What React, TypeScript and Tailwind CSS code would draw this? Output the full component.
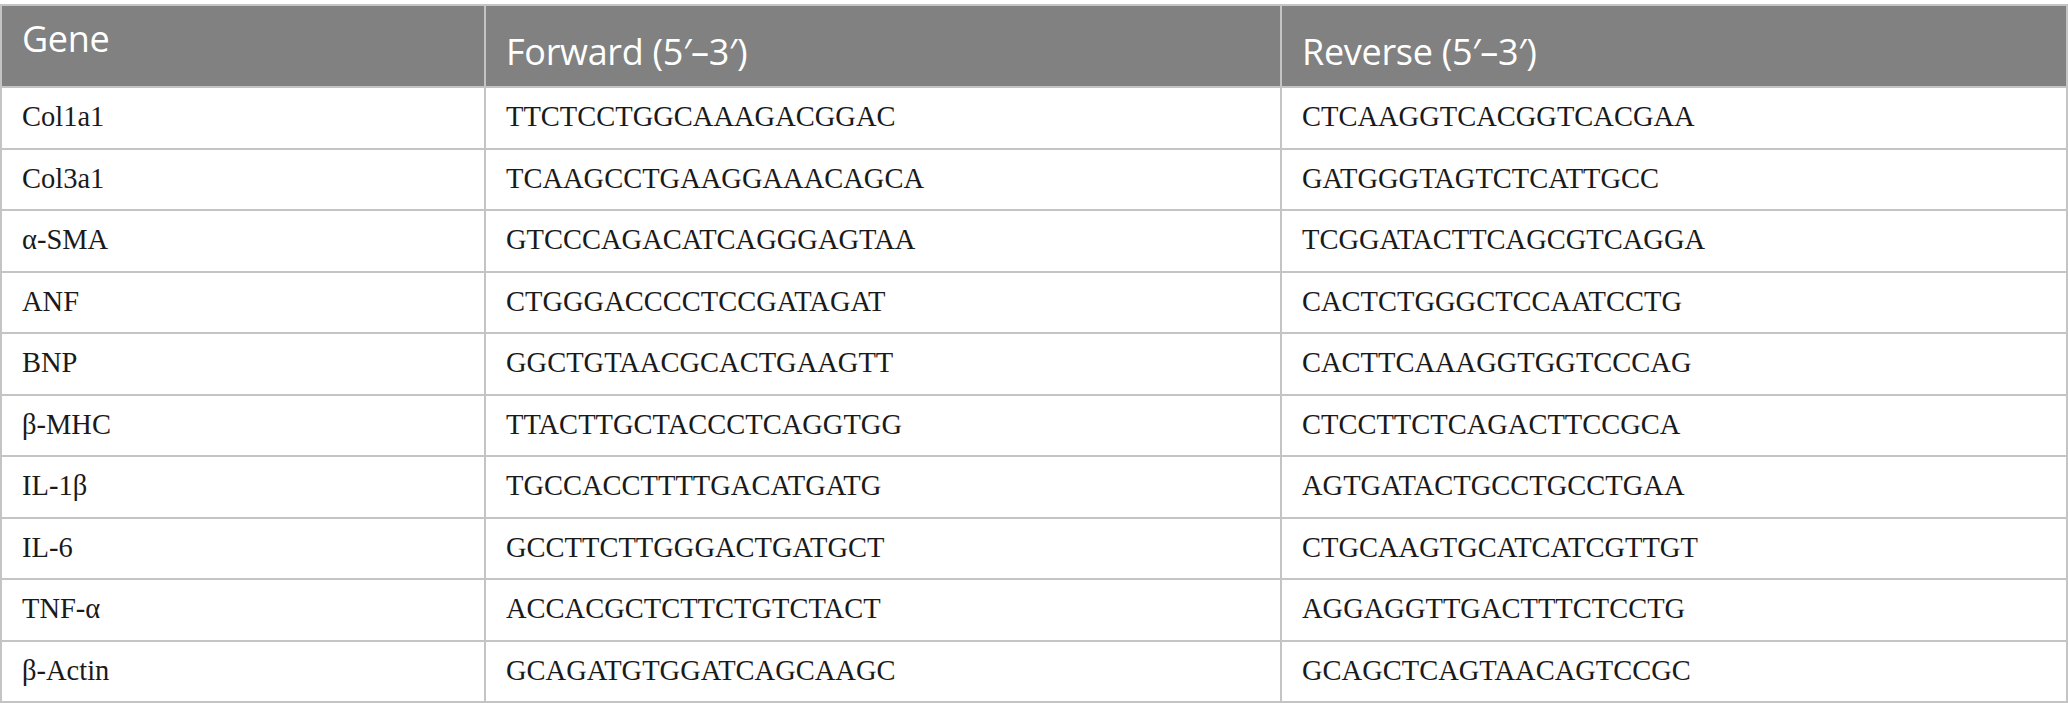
const rows: [string, string, string][] = [
  ["Col1a1", "TTCTCCTGGCAAAGACGGAC", "CTCAAGGTCACGGTCACGAA"],
  ["Col3a1", "TCAAGCCTGAAGGAAACAGCA", "GATGGGTAGTCTCATTGCC"],
  ["α-SMA", "GTCCCAGACATCAGGGAGTAA", "TCGGATACTTCAGCGTCAGGA"],
  ["ANF", "CTGGGACCCCTCCGATAGAT", "CACTCTGGGCTCCAATCCTG"],
  ["BNP", "GGCTGTAACGCACTGAAGTT", "CACTTCAAAGGTGGTCCCAG"],
  ["β-MHC", "TTACTTGCTACCCTCAGGTGG", "CTCCTTCTCAGACTTCCGCA"],
  ["IL-1β", "TGCCACCTTTTGACATGATG", "AGTGATACTGCCTGCCTGAA"],
  ["IL-6", "GCCTTCTTGGGACTGATGCT", "CTGCAAGTGCATCATCGTTGT"],
  ["TNF-α", "ACCACGCTCTTCTGTCTACT", "AGGAGGTTGACTTTCTCCTG"],
  ["β-Actin", "GCAGATGTGGATCAGCAAGC", "GCAGCTCAGTAACAGTCCGC"],
];

const headCls = "border-2 border-[#c4c4c4] bg-[#808180] text-white text-left font-['Open_Sans',sans-serif] font-normal text-[36px] leading-[1.5] tracking-[-0.3px] px-[20px]";
const cellCls = "border-2 border-[#c4c4c4] h-[61.5px] px-[20px] text-[28.5px] text-[#1a1a1a] font-['Liberation_Serif',serif] align-middle";

export default function App() {
  return (
    <div className="w-[2068px] h-[718px] bg-white pt-[4px]">
      <table className="w-[2066px] border-collapse table-fixed">
        <colgroup>
          <col className="w-[484px]" />
          <col className="w-[796px]" />
          <col className="w-[786px]" />
        </colgroup>
        <thead>
          <tr className="h-[82px]">
            <th className={`${headCls} align-top pt-[6px]`}>Gene</th>
            <th className={`${headCls} align-top pt-[19px]`}>Forward (5′–3′)</th>
            <th className={`${headCls} align-top pt-[19px]`}>Reverse (5′–3′)</th>
          </tr>
        </thead>
        <tbody>
          {rows.map(r => (
            <tr key={r[0]}>
              <td className={cellCls}>{r[0]}</td>
              <td className={cellCls}>{r[1]}</td>
              <td className={cellCls}>{r[2]}</td>
            </tr>
          ))}
        </tbody>
      </table>
    </div>
  );
}
